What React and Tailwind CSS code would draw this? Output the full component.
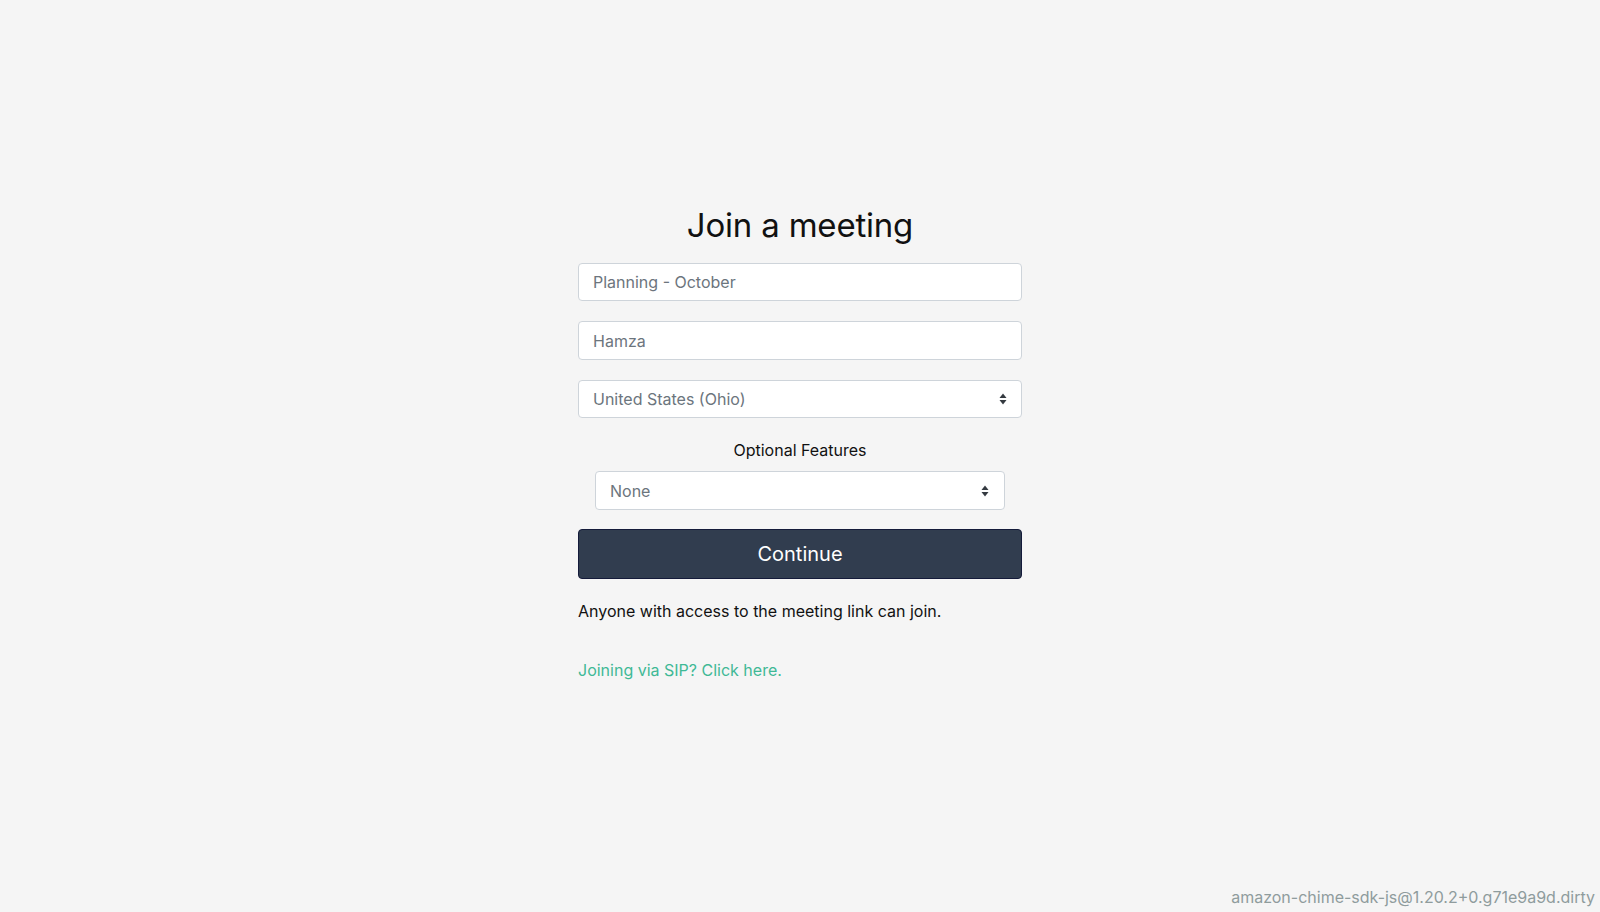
import React from "react";

function Arrows() {
  return (
    <svg width="8" height="12" viewBox="0 0 8 12" className="shrink-0">
      <path d="M4 0.5 L7.5 5 L0.5 5 Z" fill="#343a40" />
      <path d="M4 11.5 L7.5 7 L0.5 7 Z" fill="#343a40" />
    </svg>
  );
}

export default function App() {
  return (
    <div
      className="h-screen w-full bg-[#f5f5f5] flex flex-col text-[#212529]"
      style={{ fontFamily: "Inter, 'Noto Sans', 'Liberation Sans', sans-serif" }}
    >
      <div className="flex-1 flex flex-col items-center pt-[204px]">
        <div className="w-[444px] flex flex-col">
          <h1 className="text-center text-[33px] leading-[42px] font-normal text-[#111] tracking-[-0.2px]">
            Join a meeting
          </h1>
          <div className="mt-[17px] h-[38px] rounded-[4px] border border-[#ced4da] bg-white px-[14px] flex items-center text-[16px] text-[#6c757d]">
            Planning - October
          </div>
          <div className="mt-[20px] h-[39px] rounded-[4px] border border-[#ced4da] bg-white px-[14px] flex items-center text-[16px] text-[#6c757d]">
            Hamza
          </div>
          <div className="mt-[20px] h-[38px] rounded-[4px] border border-[#ced4da] bg-white pl-[14px] pr-[14px] flex items-center justify-between text-[16px] text-[#6c757d]">
            <span>United States (Ohio)</span>
            <Arrows />
          </div>
          <div className="mt-[20px] text-center text-[16px] leading-[24px] text-[#111]">
            Optional Features
          </div>
          <div className="mt-[9px] mx-[17px] h-[39px] rounded-[4px] border border-[#ced4da] bg-white pl-[14px] pr-[15px] flex items-center justify-between text-[16px] text-[#6c757d]">
            <span>None</span>
            <Arrows />
          </div>
          <button className="mt-[19px] h-[50px] rounded-[4px] border border-[#141b3a] bg-[#313d4f] text-white text-[20px] flex items-center justify-center">
            Continue
          </button>
          <p className="mt-[20px] text-[16px] leading-[24px] text-[#111]">
            Anyone with access to the meeting link can join.
          </p>
          <a className="mt-[35px] text-[16px] leading-[24px] text-[#3fb996] cursor-pointer">
            Joining via SIP? Click here.
          </a>
        </div>
      </div>
      <div className="text-right pr-[5px] pb-[5px] text-[16px] leading-[20px] text-[#8f9c9d]">
        amazon-chime-sdk-js@1.20.2+0.g71e9a9d.dirty
      </div>
    </div>
  );
}
